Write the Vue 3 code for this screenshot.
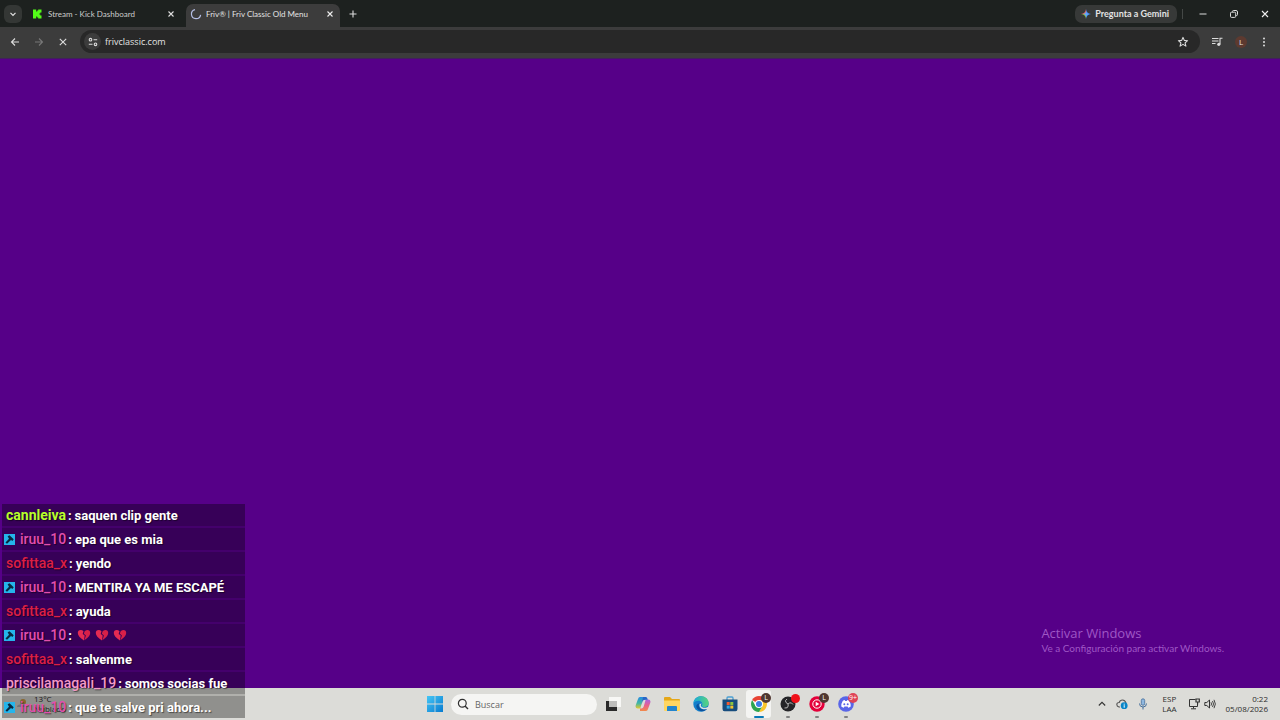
<script setup>
import { ref } from 'vue'

const address = ref('frivclassic.com')
const query = ref('')

const messages = [
  { user: 'cannleiva', tone: 'lime', text: 'saquen clip gente' },
  { user: 'iruu_10', tone: 'pink', mod: true, text: 'epa que es mia' },
  { user: 'sofittaa_x', tone: 'red', text: 'yendo' },
  { user: 'iruu_10', tone: 'pink', mod: true, text: 'MENTIRA YA ME ESCAPÉ' },
  { user: 'sofittaa_x', tone: 'red', text: 'ayuda' },
  { user: 'iruu_10', tone: 'pink', mod: true, hearts: 3 },
  { user: 'sofittaa_x', tone: 'red', text: 'salvenme' },
  { user: 'priscilamagali_19', tone: 'rose', text: 'somos socias fue' },
  { user: 'iruu_10', tone: 'pink', mod: true, text: 'que te salve pri ahora...' }
]
</script>

<template>
  <div class="desktop">
    <header class="tabstrip">
      <button class="tab-search" aria-label="Buscar pestañas">
        <svg width="8" height="8" viewBox="0 0 8 8"><path d="M1.5 2.8 4 5.3 6.500 2.8" fill="none" stroke="#e3e3e3" stroke-width="1.2" /></svg>
      </button>
      <div class="tab">
        <svg class="favicon" width="10" height="10" viewBox="0 0 10 10"><path d="M1 .5h3.200v2h1v-1h1v-1h3.300v3H8.300v1h-1v1h1v1h1.200v3H6.200v-1h-1v-1h-1v2H1z" fill="#53fc18" /></svg>
        <span class="tab-title">Stream - Kick Dashboard</span>
        <button class="close" aria-label="Cerrar pestaña">
          <svg width="8" height="8" viewBox="0 0 8 8"><path d="M1.500 1.500l5 5M6.500 1.500l-5 5" stroke="#dedede" stroke-width="1.1" /></svg>
        </button>
      </div>
      <div class="tab active">
        <svg class="favicon" width="12" height="12" viewBox="0 0 12 12"><path d="M5 1.600A4.600 4.600 0 1 0 10.600 6.800" fill="none" stroke="#b5bfe6" stroke-width="1.2" /></svg>
        <span class="tab-title">Friv® | Friv Classic Old Menu</span>
        <button class="close" aria-label="Cerrar pestaña">
          <svg width="8" height="8" viewBox="0 0 8 8"><path d="M1.500 1.500l5 5M6.500 1.500l-5 5" stroke="#eee" stroke-width="1.1" /></svg>
        </button>
      </div>
      <button class="new-tab" aria-label="Nueva pestaña">
        <svg width="8" height="8" viewBox="0 0 8 8"><path d="M4 .5v7M.5 4h7" stroke="#ddd" stroke-width="1.1" /></svg>
      </button>
      <div class="grow"></div>
      <button class="gemini">
        <svg width="10" height="10" viewBox="0 0 10 10">
          <path d="M5 0Q5.500 4.500 10 5H5z" fill="#4b8df8" />
          <path d="M5 0Q4.500 4.500 0 5h5z" fill="#ea6a5f" />
          <path d="M0 5Q4.500 5.500 5 10V5z" fill="#8fc044" />
          <path d="M10 5Q5.500 5.500 5 10V5z" fill="#4b9df8" />
          <path d="M5 2.500Q5.300 4.700 7.500 5 5.300 5.300 5 7.500 4.700 5.300 2.500 5 4.700 4.700 5 2.500z" fill="#67a5fb" />
        </svg>
        Pregunta a Gemini
      </button>
      <span class="divider"></span>
      <div class="window-controls">
        <button aria-label="Minimizar"><svg width="8" height="8" viewBox="0 0 8 8"><path d="M.5 4h7" stroke="#ddd" /></svg></button>
        <button aria-label="Restaurar"><svg width="8" height="8" viewBox="0 0 8 8"><path d="M2.500 1.800V1.500q0-1 1-1H6q1.500 0 1.500 1.500v2.500q0 1-1 1h-.4" fill="none" stroke="#ddd" /><rect x=".5" y="2.200" width="5.200" height="5.200" rx="1" fill="none" stroke="#ddd" /></svg></button>
        <button aria-label="Cerrar"><svg width="8" height="8" viewBox="0 0 8 8"><path d="M1 1l6 6M7 1 1 7" stroke="#eee" stroke-width="1.1" /></svg></button>
      </div>
    </header>

    <nav class="toolbar">
      <button class="nav-btn" aria-label="Atrás"><svg width="10" height="10" viewBox="0 0 10 10"><path d="M9 5H1.500M5 1.500 1.500 5 5 8.500" fill="none" stroke="#ddd" stroke-width="1.1" /></svg></button>
      <button class="nav-btn" aria-label="Adelante"><svg width="10" height="10" viewBox="0 0 10 10"><path d="M1 5h7.500M5 1.500 8.500 5 5 8.500" fill="none" stroke="#777" stroke-width="1.1" /></svg></button>
      <button class="nav-btn" aria-label="Detener"><svg width="10" height="10" viewBox="0 0 10 10"><path d="M1.800 1.800l6.400 6.400M8.200 1.800 1.800 8.200" stroke="#ddd" stroke-width="1.100" /></svg></button>
      <div class="omnibox">
        <button class="site-info" aria-label="Información del sitio">
          <svg width="10" height="10" viewBox="0 0 10 10" fill="none" stroke="#ddd" stroke-width="1.1"><circle cx="2.500" cy="2.700" r="1.300" /><path d="M5.500 2.700h3.700M.8 7.300h3.700" /><circle cx="7.500" cy="7.300" r="1.300" /></svg>
        </button>
        <input v-model="address" class="address" type="text" aria-label="Dirección" />
        <button class="bare" aria-label="Favorito"><svg width="12" height="12" viewBox="0 0 12 12"><path d="M6 1.400l1.300 3 3.300.3-2.500 2.200.8 3.200L6 8.400l-2.900 1.700.8-3.200L1.400 4.700l3.300-.3z" fill="none" stroke="#ddd" stroke-width="1.1" stroke-linejoin="round" /></svg></button>
      </div>
      <button class="bare media" aria-label="Contenido multimedia"><svg width="12" height="10" viewBox="0 0 12 10"><path d="M1 1.500h6.500M1 4h6.500M1 6.500h3.500M9 7V1.300h2.500" fill="none" stroke="#ddd" stroke-width="1.1" /><circle cx="7.800" cy="7.300" r="1.600" fill="#ddd" /></svg></button>
      <button class="avatar" aria-label="Perfil">L</button>
      <button class="bare" aria-label="Menú"><svg width="8" height="10" viewBox="0 0 8 10" fill="#ddd"><circle cx="4" cy="1.500" r="1" /><circle cx="4" cy="5" r="1" /><circle cx="4" cy="8.500" r="1" /></svg></button>
    </nav>

    <main class="page">
      <aside class="watermark">
        <p class="wm-title">Activar Windows</p>
        <p class="wm-text">Ve a Configuración para activar Windows.</p>
      </aside>
    </main>

    <footer class="taskbar">
      <div class="weather">
        <svg width="12" height="12" viewBox="0 0 12 12"><circle cx="7" cy="4" r="3" fill="#cf9c45" /><path d="M1 9q0-2.500 3-2.500Q6 4 8.500 6.500 11 7 11 9z" fill="#a9b2bb" /></svg>
        <div class="weather-text"><span>13°C</span><span>Nublado</span></div>
      </div>
      <div class="apps">
        <button class="app" aria-label="Inicio">
          <svg width="16" height="16" viewBox="0 0 16 16"><defs><linearGradient id="win" x2="1" y2="1"><stop stop-color="#45c6f5" /><stop offset="1" stop-color="#087bd0" /></linearGradient></defs><path d="M0 0h7.600v7.600H0zM8.400 0H16v7.600H8.400zM0 8.400h7.600V16H0zM8.400 8.400H16V16H8.400z" fill="url(#win)" /></svg>
        </button>
        <label class="search">
          <svg width="12" height="12" viewBox="0 0 12 12"><circle cx="5.300" cy="5.300" r="3.900" fill="none" stroke="#303030" stroke-width="1.2" /><path d="M8 8l3 3" stroke="#303030" stroke-width="1.4" /></svg>
          <input v-model="query" type="text" placeholder="Buscar" aria-label="Buscar" />
        </label>
        <button class="app" aria-label="Vista de tareas">
          <svg width="16" height="16" viewBox="0 0 16 16"><path d="M3 1h12v10H3z" fill="#f7f7f5" /><path d="M0 5h11v10H0z" fill="#292929" /><path d="M3 5h8v6H3z" fill="#bdbdbb" /></svg>
        </button>
        <button class="app" aria-label="Copilot">
          <svg width="16" height="16" viewBox="0 0 16 16"><defs><linearGradient id="cpa" x2="0" y2="1"><stop stop-color="#258be2" /><stop offset=".55" stop-color="#42b7a1" /><stop offset="1" stop-color="#e7c72d" /></linearGradient><linearGradient id="cpb" x2="0" y2="1"><stop stop-color="#a764e5" /><stop offset=".5" stop-color="#e8608d" /><stop offset="1" stop-color="#f18a4a" /></linearGradient></defs><path d="M11 1H5Q3.500 1 3 3L.8 9q-1 3.500 2 3.500h2.500l2-7q.5-2 2.500-2h1.500z" fill="url(#cpa)" /><path d="M5 15h6q1.500 0 2-2l2.200-6q1-3.500-2-3.500h-2.500l-2 7q-.5 2-2.500 2H5z" fill="url(#cpb)" /><path d="M8 1h3q1.300 0 1.800 2.800H10q-2 0-2.600 2L6.500 9z" fill="#2866c7" /></svg>
        </button>
        <button class="app" aria-label="Explorador de archivos">
          <svg width="18" height="16" viewBox="0 0 18 16"><path d="M1 2q0-1 1-1h5l2 2h7q1 0 1 1v4H1z" fill="#e5a719" /><path d="M1 4.500h16V14q0 1-1 1H2q-1 0-1-1z" fill="#ffd661" /><path d="M4 15v-4q0-1 1-1h8q1 0 1 1v4z" fill="#2385ce" /></svg>
        </button>
        <button class="app" aria-label="Edge">
          <svg width="16" height="16" viewBox="0 0 16 16"><defs><linearGradient id="edg" x2="1"><stop stop-color="#1aa9dc" /><stop offset="1" stop-color="#58d47a" /></linearGradient></defs><circle cx="8" cy="8" r="7.700" fill="#137fcb" /><path d="M.4 7.500C1 2.800 4.200.3 8 .3c4.500 0 7.700 3.200 7.700 6.700 0 2.600-2 4-4.200 4-1.900 0-2.900-.7-2.500-1.500C10.200 7.200 8.300 4.800 5.500 4.800 3 4.800 1 6 .4 7.500z" fill="url(#edg)" /><path d="M6.200 7.400c-1.700 3 1 6.500 5 6 1.500-.2 2.500-.8 3.200-1.200C12.500 15.600 7 16.500 4.200 12.800 2.400 10.300 3.500 7.700 6.200 7.400z" fill="#0b529e" /><path d="M8.700 7.500c-2.500 2.500.8 5.500 5.600 3.700l1.500-1-.2 2.300-1.400.5c-4.500 1.400-8.700-1.600-7.500-5z" fill="#e0e2de" /></svg>
        </button>
        <button class="app" aria-label="Microsoft Store">
          <svg width="16" height="16" viewBox="0 0 16 16"><path d="M5 4V2q0-1 1-1h4q1 0 1 1v2" fill="none" stroke="#4b9ed2" stroke-width="1.300" /><path d="M.5 3.500h15V13q0 2.300-2 2.300h-11q-2 0-2-2.300z" fill="#174c7d" /><path d="M4.700 6h3v3h-3z" fill="#f15b31" /><path d="M8.300 6h3v3h-3z" fill="#8ac43f" /><path d="M4.700 9.600h3v3h-3z" fill="#30a8e4" /><path d="M8.300 9.600h3v3h-3z" fill="#f3c32d" /></svg>
        </button>
        <button class="app current" aria-label="Chrome">
          <svg width="16" height="16" viewBox="0 0 16 16"><path d="M8 8 1.100 4A8 8 0 0 1 14.900 4z" fill="#e84435" /><path d="M8 8l3.500 2L8 16A8 8 0 0 0 14.900 4H8z" fill="#f9c52b" /><path d="M1.100 4A8 8 0 0 0 8 16l3.500-6H8L4.500 10z" fill="#2da44f" /><circle cx="8" cy="8" r="4" fill="#fff" /><circle cx="8" cy="8" r="3" fill="#3d7ee5" /></svg>
          <span class="badge brown">L</span>
        </button>
        <button class="app open" aria-label="OBS Studio">
          <svg width="16" height="16" viewBox="0 0 16 16"><circle cx="8" cy="8" r="7.500" fill="#252528" /><g fill="none" stroke="#b8b8b8" stroke-width="1"><path d="M7 3Q4.500 4.500 6 6.500L8 8" /><path d="M13 8.500Q11.500 6 9.500 7L8 8" /><path d="M4.500 12Q8 12.500 8.200 10L8 8" /></g></svg>
          <span class="badge dot"></span>
        </button>
        <button class="app open" aria-label="YouTube Music">
          <svg width="16" height="16" viewBox="0 0 16 16"><circle cx="8" cy="8" r="7.700" fill="#e4003a" /><circle cx="8" cy="8" r="4.200" fill="none" stroke="#fff" /><path d="M6.700 5.700v4.600L10.300 8z" fill="#fff" /></svg>
          <span class="badge brown">L</span>
        </button>
        <button class="app open" aria-label="Discord">
          <svg width="16" height="16" viewBox="0 0 16 16"><circle cx="8" cy="8" r="7.800" fill="#5966e8" /><path d="M4.700 5q1-.8 2-1l.5.9h1.600l.5-.9q1 .2 2 1 1.600 2.500 1.400 5.500-1 .9-2.500 1.200l-.6-1.200H6.400l-.6 1.200q-1.500-.3-2.500-1.200Q3.100 7.500 4.700 5z" fill="#fff" /><circle cx="6.300" cy="8.200" r="1" fill="#5966e8" /><circle cx="9.700" cy="8.200" r="1" fill="#5966e8" /></svg>
          <span class="badge count">9+</span>
        </button>
      </div>
      <div class="tray">
        <button aria-label="Iconos ocultos"><svg width="8" height="8" viewBox="0 0 8 8"><path d="M.8 5.500 4 2.300l3.200 3.200" fill="none" stroke="#333" stroke-width="1.1" /></svg></button>
        <button aria-label="OneDrive"><svg width="12" height="12" viewBox="0 0 12 12"><path d="M4 9H3Q.8 8.500.8 6.500T3.200 4.500Q4 2 6.500 2T10 5" fill="none" stroke="#555" stroke-width="1.1" /><circle cx="8.200" cy="7.700" r="3.400" fill="#0785c8" /><path d="M8.200 5.700v1M8.200 7.200v2.500" stroke="#fff" /></svg></button>
        <button aria-label="Micrófono"><svg width="10" height="12" viewBox="0 0 10 12"><rect x="3.300" y=".8" width="3.400" height="6.500" rx="1.700" fill="#8eb7df" stroke="#456f9c" stroke-width=".8" /><path d="M1.500 5.500Q1.500 9 5 9t3.500-3.500M5 9v2.500" fill="none" stroke="#456f9c" /></svg></button>
        <button class="lang"><span>ESP</span><span>LAA</span></button>
        <button class="system" aria-label="Red y volumen">
          <svg width="12" height="12" viewBox="0 0 12 12"><path d="M7.500 1.500h-6v7h8V6M5.500 8.500v2M3 10.800h5" fill="none" stroke="#333" /><path d="M8 1h3.300v3H8zM9.600 4v2.500" fill="none" stroke="#333" stroke-width="1.200" /></svg>
          <svg width="12" height="12" viewBox="0 0 12 12"><path d="M.8 4.500h2L5.500 2v8L2.800 7.500h-2z" fill="none" stroke="#333" /><path d="M7 4.300q1 1.700 0 3.400M8.500 3q2 3 0 6M10 1.800q2.700 4.200 0 8.400" fill="none" stroke="#333" stroke-width=".9" /></svg>
        </button>
        <button class="clock"><span>0:22</span><span>05/08/2026</span></button>
      </div>
    </footer>

    <ul class="chat">
      <li v-for="(m, i) in messages" :key="i" class="message" :class="{ mod: m.mod }">
        <svg v-if="m.mod" class="mod-badge" width="11" height="11" viewBox="0 0 11 11"><rect width="11" height="11" fill="#25b5eb" /><path d="M3.600 2.300 5.500 1.200 9.700 5.200 8.400 7 7 6 3 9.700 1.500 8.500 5 4.800z" fill="#082941" /></svg>
        <span class="user" :class="m.tone">{{ m.user }}</span>
        <span class="body"><span class="colon">:</span><template v-if="m.text">{{ m.text }}</template>
          <span v-else class="hearts">
            <svg v-for="h in m.hearts" :key="h" width="14" height="12" viewBox="0 0 14 12"><path d="M7 11.500Q.8 7.500.8 4 .8 1 3.700 1q1.600 0 2.800 1.300L5.700 5l2 1.500z" fill="#e52b52" /><path d="M7.400 11.200Q13.200 7.500 13.200 4q0-3-2.900-3Q8.500 1 7.500 2.500l-.6 2.200 2 1.700z" fill="#d82048" /></svg>
          </span>
        </span>
      </li>
    </ul>
  </div>
</template>

<style>
html,
body {
  height: 100%;
  overflow: hidden;
}
#app {
  height: 100%;
}
</style>

<style scoped>
.desktop {
  position: relative;
  display: flex;
  flex-direction: column;
  height: 100%;
  font-family: "Open Sans", "Noto Sans", sans-serif;
  font-size: 9px;
  background: #560088;
}
.desktop * {
  box-sizing: border-box;
}
button {
  display: flex;
  align-items: center;
  justify-content: center;
  flex: none;
  padding: 0;
  border: 0;
  background: none;
  color: inherit;
  font: inherit;
}
input {
  min-width: 0;
  padding: 0;
  border: 0;
  outline: 0;
  background: none;
  color: inherit;
  font: inherit;
}
svg {
  display: block;
  flex: none;
}
.grow {
  flex: 1;
}

.tabstrip {
  display: flex;
  align-items: center;
  flex: none;
  height: 27px;
  padding: 0 0 0 4px;
  background: #1d211f;
  color: #e3e3e3;
  font-family: Lato, "Open Sans", sans-serif;
}
.tab-search {
  width: 18px;
  height: 18px;
  border-radius: 6px;
  background: #343735;
}
.tab {
  display: flex;
  align-items: center;
  width: 155px;
  height: 23px;
  margin-left: 8px;
  padding: 0 0 0 2px;
  color: #cbcccb;
}
.tab .favicon {
  margin-right: 6px;
}
.tab-title {
  flex: 1;
  font-size: 8px;
  white-space: nowrap;
}
.close {
  width: 16px;
  height: 16px;
  margin-right: 6px;
}
.tab.active {
  align-self: flex-end;
  width: 154px;
  margin-left: 1px;
  padding-bottom: 4px;
  padding-left: 4px;
  border-radius: 7px 7px 0 0;
  background: #3c3c3c;
  color: #e3e3e3;
}
.tab.active .favicon {
  margin-right: 4px;
}
.tab.active .close {
  margin-right: 2px;
}
.new-tab {
  width: 16px;
  height: 16px;
  margin-left: 5px;
}
.gemini {
  gap: 4px;
  height: 18px;
  padding: 0 8px 0 6px;
  border-radius: 7px;
  background: #373938;
  font-weight: 700;
}
.divider {
  width: 1px;
  height: 10px;
  margin-left: 5px;
  background: #444846;
}
.window-controls {
  display: flex;
  margin-left: 4px;
}
.window-controls button {
  width: 31px;
  height: 24px;
}

.toolbar {
  display: flex;
  align-items: center;
  flex: none;
  height: 31px;
  padding: 0 12px 2px 3px;
  background: #3c3c3c;
  color: #e3e3e3;
}
.nav-btn {
  width: 24px;
  height: 24px;
}
.omnibox {
  display: flex;
  align-items: center;
  flex: 1;
  height: 23px;
  margin-left: 5px;
  padding: 0 11px 0 4px;
  border-radius: 12px;
  background: #282828;
}
.site-info {
  width: 17px;
  height: 17px;
  border-radius: 50%;
  background: #3c3c3c;
}
.address {
  flex: 1;
  margin-left: 4px;
}
.media {
  margin-left: 11px;
}
.avatar {
  width: 12px;
  height: 12px;
  margin: 0 13px 0 12px;
  border-radius: 50%;
  background: #5d3a30;
  font-size: 8px;
}

.page {
  position: relative;
  flex: 1;
  border-top: 1px solid #41205c;
  background: #560088;
}
.watermark {
  position: absolute;
  right: 56px;
  bottom: 33px;
  color: #9f57c5;
}
.wm-title,
.wm-text {
  margin: 0;
}
.wm-title {
  font-size: 13px;
  line-height: 16px;
}
.wm-text {
  font-family: Lato, "Open Sans", sans-serif;
  font-size: 10px;
  line-height: 14px;
}

.taskbar {
  display: grid;
  grid-template-columns: 1fr auto 1fr;
  align-items: center;
  flex: none;
  height: 32px;
  background: #dcdcd8;
  color: #2c2c2c;
}
.weather {
  display: flex;
  align-items: center;
  gap: 6px;
  padding-left: 16px;
  font-size: 8px;
  line-height: 10px;
}
.weather-text {
  display: flex;
  flex-direction: column;
}
.apps {
  display: flex;
  align-items: center;
  gap: 4px;
}
.app {
  position: relative;
  width: 25px;
  height: 28px;
  border-radius: 3px;
}
.app.current {
  background: #f4f4f2;
}
.app.open::after,
.app.current::after {
  content: "";
  position: absolute;
  bottom: 0;
  left: 50%;
  width: 4px;
  height: 2px;
  margin-left: -2px;
  border-radius: 1px;
  background: #818181;
}
.app.current::after {
  width: 10px;
  margin-left: -5px;
  background: #0879b8;
}
.badge {
  position: absolute;
  top: 3px;
  right: 0;
  min-width: 10px;
  height: 10px;
  border-radius: 5px;
  color: #fff;
  font-size: 7px;
  line-height: 10px;
  text-align: center;
}
.brown {
  background: #513831;
}
.dot {
  top: 4px;
  min-width: 9px;
  height: 9px;
  background: #f01019;
}
.count {
  background: #df4357;
}
.search {
  display: flex;
  align-items: center;
  gap: 6px;
  width: 146px;
  height: 21px;
  padding: 0 8px 0 6px;
  border-radius: 11px;
  background: #f5f5f3;
  color: #555;
}
.search input {
  flex: 1;
}
.search input::placeholder {
  color: #666;
  opacity: 1;
}
.tray {
  display: flex;
  align-items: center;
  justify-content: flex-end;
  gap: 10px;
  padding-right: 12px;
  font-size: 8px;
  line-height: 10px;
}
.lang,
.clock {
  flex-direction: column;
}
.lang {
  margin: 0 1px 0 4px;
}
.clock {
  align-items: flex-end;
}
.system {
  gap: 4px;
}

.chat {
  position: absolute;
  bottom: 2px;
  left: 2px;
  display: flex;
  flex-direction: column;
  gap: 2px;
  width: 243px;
  margin: 0;
  padding: 0;
  list-style: none;
  background: rgba(0, 0, 0, 0.2);
  font-family: Roboto, sans-serif;
  font-size: 13px;
}
.message {
  display: flex;
  align-items: center;
  height: 22px;
  padding-left: 4px;
  background: rgba(0, 0, 0, 0.18);
  white-space: nowrap;
}
.message.mod {
  padding-left: 2px;
}
.mod-badge {
  margin-right: 5px;
}
.user,
.body {
  text-shadow: 1px 1px 1px rgba(0, 0, 0, 0.5);
}
.user {
  font-size: 14px;
  font-weight: 500;
}
.body {
  display: flex;
  align-items: center;
  color: #fff;
  font-weight: 700;
}
.colon {
  margin: 0 3px 0 2px;
}
.lime {
  color: #b8ff2b;
  font-weight: 700;
}
.pink {
  color: #e34fae;
}
.red {
  color: #dc1f45;
}
.rose {
  color: #f49ac6;
}
.hearts {
  display: flex;
  gap: 4px;
  margin-left: 2px;
}
</style>
